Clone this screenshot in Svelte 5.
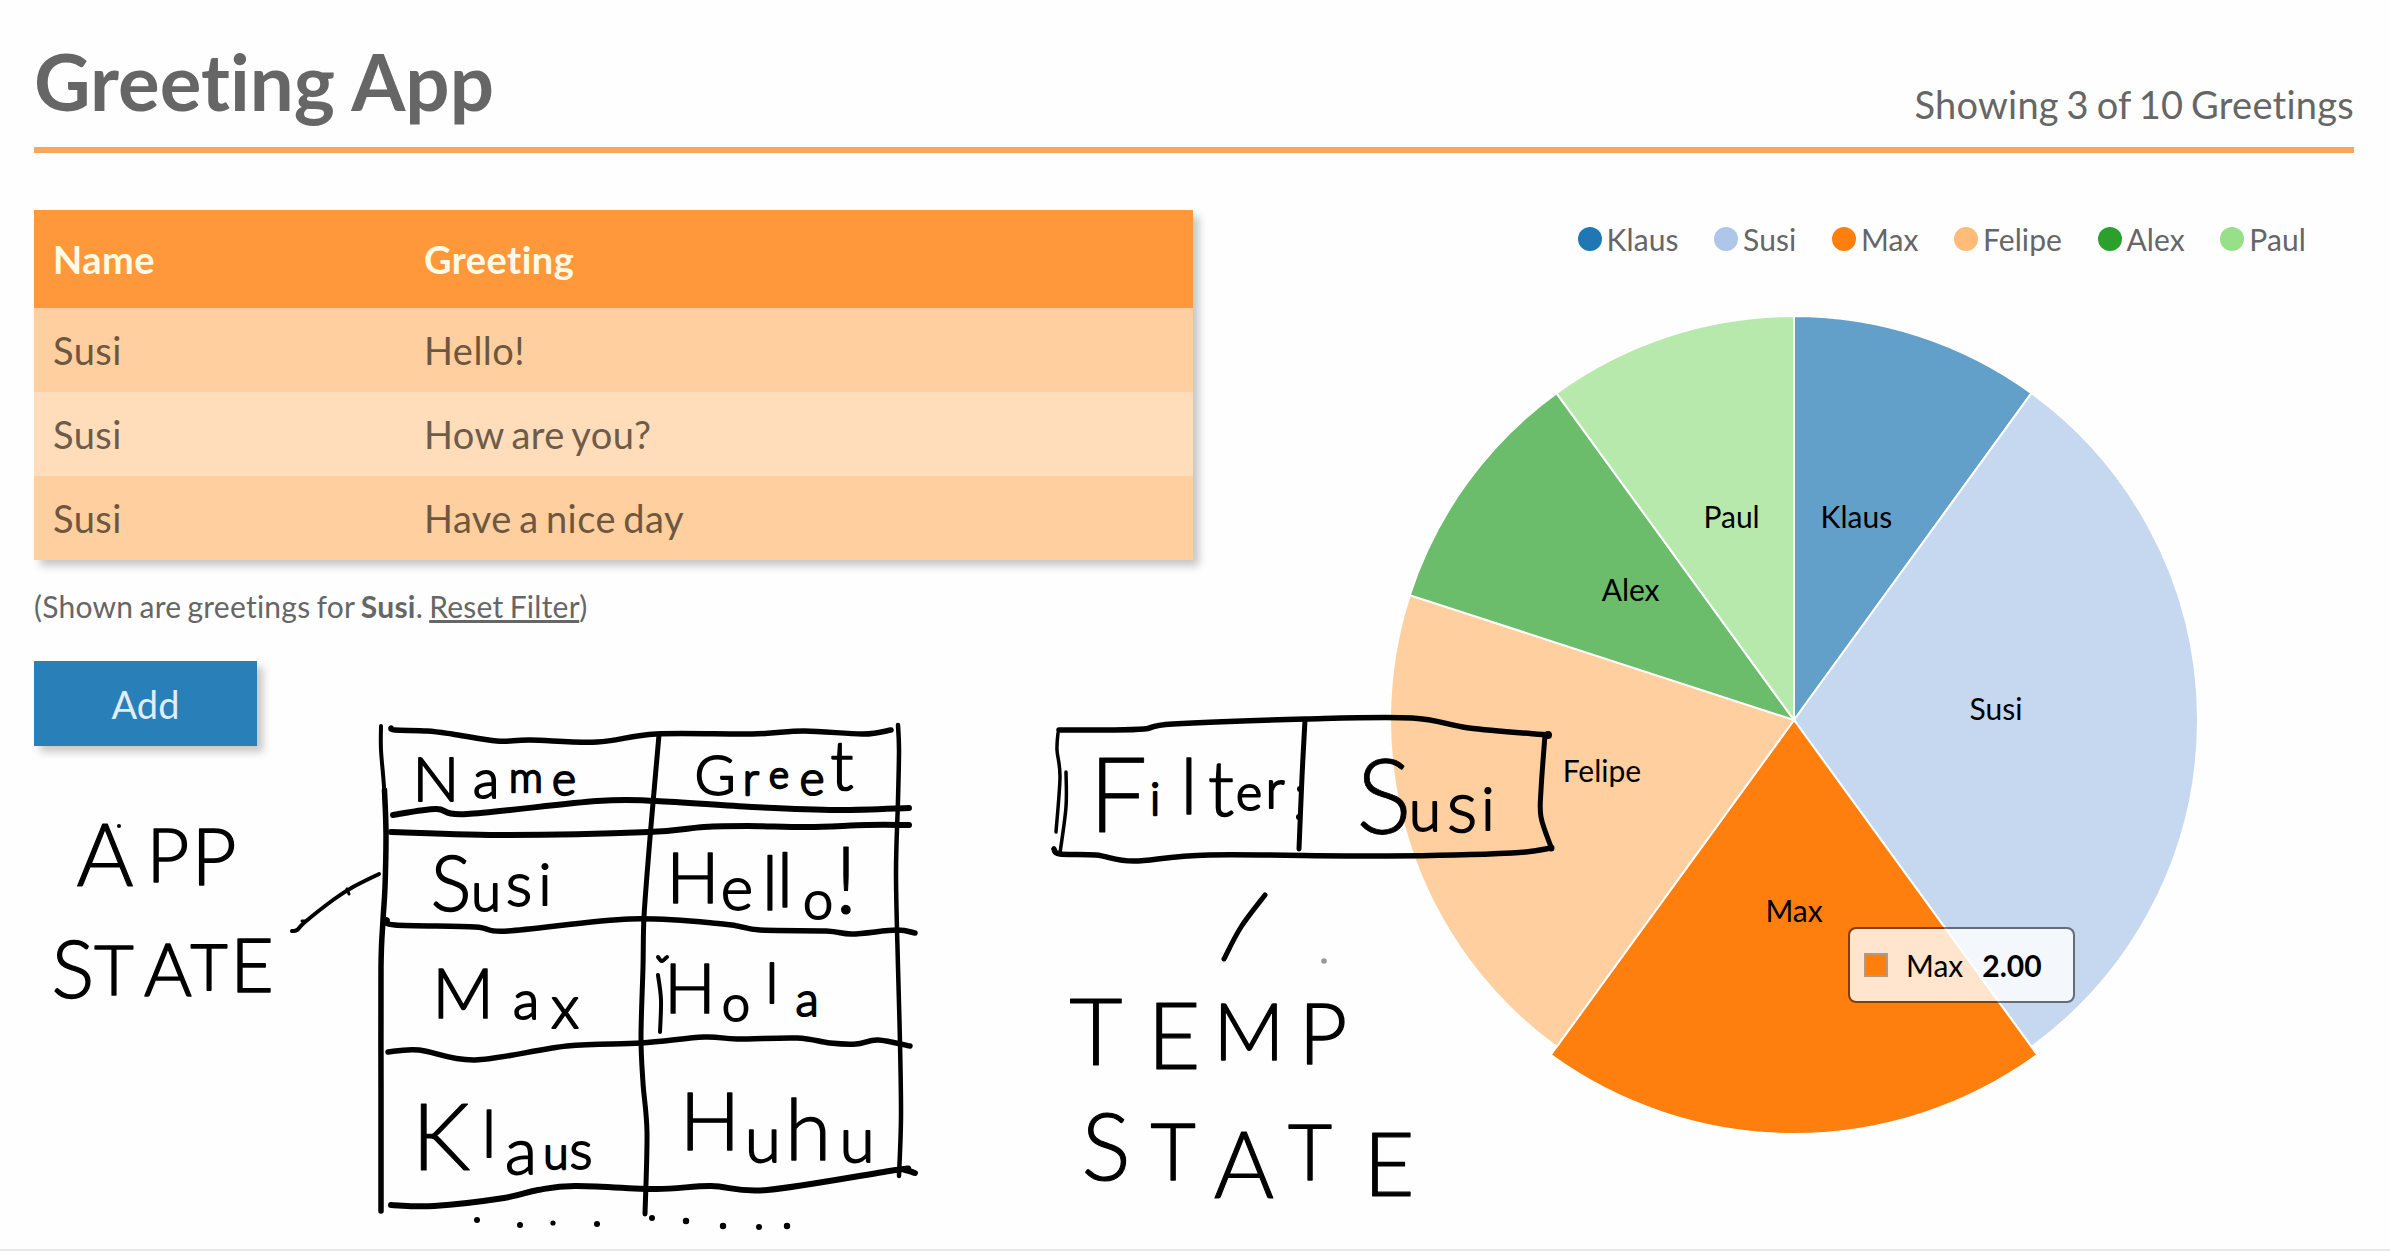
<script>
  const rows = [
    { name: 'Susi', greeting: 'Hello!' },
    { name: 'Susi', greeting: 'How are you?' },
    { name: 'Susi', greeting: 'Have a nice day' }
  ];

  const people = [
    { name: 'Klaus', count: 1, color: '#1f77b4' },
    { name: 'Susi', count: 3, color: '#aec7e8' },
    { name: 'Max', count: 2, color: '#ff7f0e', active: true },
    { name: 'Felipe', count: 2, color: '#ffbb78' },
    { name: 'Alex', count: 1, color: '#2ca02c' },
    { name: 'Paul', count: 1, color: '#98df8a' }
  ];

  const total = people.reduce((sum, p) => sum + p.count, 0);
  const radius = 404;

  function polar(r, turn) {
    const a = turn * 2 * Math.PI;
    return [r * Math.sin(a), -r * Math.cos(a)];
  }

  let passed = 0;
  const slices = people.map((p) => {
    const from = passed / total;
    passed += p.count;
    const to = passed / total;
    const r = p.active ? radius + 10 : radius;
    const [x1, y1] = polar(r, from);
    const [x2, y2] = polar(r, to);
    const [lx, ly] = polar(radius / 2, (from + to) / 2);
    return { ...p, lx, ly, d: `M0 0L${x1} ${y1}A${r} ${r} 0 0 1 ${x2} ${y2}Z` };
  });

  // Catmull-Rom curve through a list of points
  function smooth(p) {
    let d = `M${p[0][0]} ${p[0][1]}`;
    for (let i = 0; i < p.length - 1; i++) {
      const a = p[i - 1] ?? p[i];
      const b = p[i];
      const c = p[i + 1];
      const e = p[i + 2] ?? c;
      d += `C${b[0] + (c[0] - a[0]) / 6} ${b[1] + (c[1] - a[1]) / 6} ${c[0] - (e[0] - b[0]) / 6} ${c[1] - (e[1] - b[1]) / 6} ${c[0]} ${c[1]}`;
    }
    return d;
  }

  const strokes = [
    // sketched table: verticals
    { w: 4, p: [[381, 726], [381, 750], [384, 787], [386, 833]] },
    { w: 5.5, p: [[384.5, 790], [386, 833], [385, 887], [383, 920], [381, 967], [381, 1090], [381, 1211]] },
    { w: 4.5, p: [[898, 725], [899, 750], [898, 800], [896, 873], [898, 967], [900, 1043], [901, 1117], [899, 1176]] },
    { w: 5, p: [[659, 735], [653, 803], [649, 850], [644, 917], [643, 967], [641, 1037], [643, 1083], [647, 1133], [645, 1214]] },
    // sketched table: horizontals
    { w: 5.5, p: [[391, 728], [395, 730], [427, 731], [452, 734], [497, 741], [530, 740], [597, 742], [656, 734], [752, 734], [804, 731], [863, 734], [891, 730]] },
    { w: 6, p: [[393, 815], [436, 809], [467, 814], [597, 801], [656, 801], [752, 807], [837, 810], [909, 808]] },
    { w: 6, p: [[391, 832], [508, 835], [649, 832], [704, 827], [748, 826], [808, 827], [867, 825], [909, 825]] },
    { w: 5.5, p: [[387, 920], [395, 925], [475, 927], [508, 931], [630, 919], [723, 924], [760, 930], [826, 931], [852, 934], [896, 930], [915, 933]] },
    { w: 5.5, p: [[388, 1052], [419, 1050], [475, 1060], [567, 1046], [641, 1043], [704, 1037], [737, 1039], [797, 1038], [830, 1043], [856, 1044], [878, 1040], [910, 1046]] },
    { w: 6, p: [[391, 1205], [434, 1206], [504, 1198], [538, 1190], [575, 1186], [656, 1189], [711, 1186], [767, 1190], [896, 1170], [905, 1170], [915, 1173]] },
    // stray marks beside the third row
    { w: 4, p: [[658, 975], [661, 1000], [660, 1032]] },
    { w: 4, p: [[658, 957], [662, 961], [667, 957]] },
    // connector from the label to the table
    { w: 4, p: [[292, 931], [297, 930], [305, 922], [333, 900], [353, 887], [379, 874]] },
    { w: 3, p: [[347, 889], [349, 894]] },
    { w: 3, p: [[302, 921], [305, 921]] },
    // filter box
    { w: 5.5, p: [[1059, 730], [1105, 730], [1144, 729], [1173, 724], [1305, 719], [1412, 718], [1469, 728], [1548, 735]] },
    { w: 5, p: [[1545, 735], [1541, 790], [1541, 817], [1551, 847]] },
    { w: 5.5, p: [[1054, 849], [1060, 854], [1096, 855], [1134, 861], [1209, 855], [1387, 856], [1512, 853], [1551, 848]] },
    { w: 3.5, p: [[1058, 733], [1057, 750], [1060, 777], [1056, 832]] },
    { w: 3.5, p: [[1066, 772], [1066, 807], [1060, 853]] },
    { w: 5, p: [[1305, 720], [1302, 777], [1299, 849]] },
    { w: 5, p: [[1265, 895], [1241, 927], [1224, 959]] }
  ];

  // x, y, radius
  const dots = [
    [477, 1220, 3], [520, 1225, 3], [553, 1223, 2.6], [597, 1224, 3], [652, 1218, 3],
    [686, 1221, 3.2], [723, 1226, 3.2], [759, 1227, 3], [787, 1226, 3.2], [119, 826, 2],
    [1300, 789, 3], [1299, 817, 3], [1548, 735, 4], [1551, 848, 3.5]
  ];

  // each letter: character, centre x, baseline y, size
  const notes = [
    [['A', 105, 886, 87], ['P', 168, 882, 74], ['P', 214, 885, 78]],
    [['S', 73, 998, 80], ['T', 114, 995, 68], ['A', 168, 996, 73], ['T', 209, 990, 64], ['E', 252, 992, 75]],
    [['N', 436, 801, 62], ['a', 486, 798, 54], ['m', 526, 792, 42], ['e', 564, 795, 46]],
    [['G', 715, 795, 56], ['r', 751, 795, 46], ['e', 779, 788, 38], ['e', 812, 795, 48], ['t', 842, 790, 68]],
    [['S', 451, 911, 76], ['u', 486, 911, 54], ['s', 519, 906, 62], ['i', 545, 905, 58]],
    [['H', 693, 903, 70], ['e', 737, 910, 62], ['l', 770, 910, 74], ['l', 785, 907, 74], ['o', 818, 919, 54], ['!', 846, 913, 92]],
    [['M', 463, 1018, 68], ['a', 526, 1019, 54], ['x', 565, 1028, 60]],
    [['H', 690, 1013, 68], ['o', 736, 1021, 50], ['l', 772, 1003, 56], ['a', 807, 1016, 48]],
    [['K', 441, 1170, 92], ['l', 489, 1157, 66], ['a', 521, 1174, 66], ['u', 556, 1169, 46], ['s', 581, 1169, 54]],
    [['H', 710, 1150, 80], ['u', 763, 1162, 66], ['h', 808, 1160, 84], ['u', 857, 1162, 64]],
    [['F', 1118, 832, 104], ['i', 1155, 815, 46], ['l', 1189, 814, 76], ['t', 1221, 816, 76], ['e', 1249, 810, 50], ['r', 1275, 808, 54]],
    [['S', 1384, 834, 104], ['u', 1425, 831, 58], ['s', 1462, 832, 72], ['i', 1488, 830, 60]],
    [['T', 1096, 1065, 92], ['E', 1174, 1069, 92], ['M', 1249, 1060, 78], ['P', 1323, 1064, 84]],
    [['S', 1106, 1180, 92], ['T', 1173, 1180, 78], ['A', 1244, 1198, 92], ['T', 1310, 1180, 76], ['E', 1389, 1196, 88]]
  ];

  // outline that brings a light letter of any size to one pen width
  const penOutline = (size) => 3.4 - size * 0.025;
</script>

<div class="page">
  <header>
    <h1>Greeting App</h1>
    <span class="count">Showing 3 of 10 Greetings</span>
  </header>

  <main>
    <section class="list">
      <table>
        <thead>
          <tr><th class="name">Name</th><th>Greeting</th></tr>
        </thead>
        <tbody>
          {#each rows as row}
            <tr><td>{row.name}</td><td>{row.greeting}</td></tr>
          {/each}
        </tbody>
      </table>
      <p class="filter">(Shown are greetings for <b>Susi</b>. <a href="#reset">Reset Filter</a>)</p>
      <button>Add</button>
    </section>

    <section class="chart">
      <ul class="legend">
        {#each people as p}
          <li>
            <svg class="dot" viewBox="0 0 24 24"><circle cx="12" cy="12" r="12" fill={p.color} /></svg>
            <span>{p.name}</span>
          </li>
        {/each}
      </ul>
      <svg class="pie" viewBox="-420 -420 840 840">
        {#each slices as s}
          <path class="slice" class:active={s.active} d={s.d} fill={s.color} />
        {/each}
        {#each slices as s}
          <text class="label" x={s.lx} y={s.ly}>{s.name}</text>
        {/each}
      </svg>
      <div class="tooltip">
        <span class="swatch"></span>
        <span class="key">Max</span>
        <b>2.00</b>
      </div>
    </section>
  </main>

  <svg class="ink" viewBox="0 0 2390 1251">
    {#each strokes as s}
      <path d={smooth(s.p)} stroke-width={s.w} />
    {/each}
    {#each dots as [x, y, r]}
      <circle cx={x} cy={y} {r} />
    {/each}
    <circle class="pointer" cx="1324" cy="961" r="2.8" />
    {#each notes as letters}
      <text>{#each letters as [c, x, y, size]}<tspan {x} {y} font-size={size} stroke-width={penOutline(size)}>{c}</tspan>{/each}</text>
    {/each}
  </svg>
</div>

<style>
  :global(body) {
    background: #fefefe;
  }
  .page {
    position: relative;
    box-sizing: border-box;
    width: 2390px;
    height: 1251px;
    padding: 0 36px 0 34px;
    border-bottom: 2px solid #e9e9e9;
    overflow: hidden;
    color: #666;
    font: 38px/1.2 Lato, sans-serif;
    font-variant-ligatures: none;
  }
  header {
    display: flex;
    justify-content: space-between;
    align-items: baseline;
    box-sizing: border-box;
    height: 153px;
    padding-top: 34px;
    border-bottom: 6px solid #f9a65a;
  }
  h1 {
    margin: 0;
    font-size: 78px;
    font-weight: 700;
    line-height: 94px;
  }
  .count {
    position: relative;
    top: 8px;
    letter-spacing: 0.25px;
    word-spacing: -2.2px;
  }
  main {
    display: flex;
    padding-top: 57px;
  }
  .list {
    width: 1159px;
  }
  table {
    width: 100%;
    border-collapse: collapse;
    box-shadow: 6px 6px 8px rgba(0, 0, 0, 0.22);
  }
  th,
  td {
    padding: 2px 20px 0 19px;
    text-align: left;
    letter-spacing: 0.45px;
    word-spacing: -2.8px;
  }
  th {
    height: 96px;
    background: #ff983b;
    color: #fffbe6;
    font-weight: 700;
  }
  .name {
    width: 332px;
  }
  td {
    height: 82px;
    background: #ffcf9f;
    color: #6d573f;
  }
  tr:nth-child(even) td {
    background: #ffddbb;
    color: #6d5c4a;
  }
  .filter {
    margin: 28px 0 0;
    font-size: 30px;
    line-height: 36px;
    letter-spacing: 0.25px;
    word-spacing: -1.8px;
  }
  .filter a {
    color: inherit;
    text-decoration: underline;
  }
  button {
    display: block;
    width: 223px;
    height: 85px;
    margin-top: 37px;
    padding: 2px 0 0;
    border: 0;
    background: #297fb8;
    box-shadow: 6px 6px 8px rgba(0, 0, 0, 0.22);
    color: #e1edf5;
    font: inherit;
  }
  .chart {
    position: relative;
    flex: 1;
  }
  .legend {
    display: flex;
    justify-content: flex-end;
    gap: 35.5px;
    margin: 0;
    padding: 11px 48px 0 0;
    list-style: none;
    font-size: 30px;
    line-height: 36px;
    letter-spacing: 0.1px;
  }
  .legend li {
    display: flex;
    align-items: center;
    gap: 5px;
  }
  .dot {
    width: 24px;
    height: 24px;
  }
  .pie {
    display: block;
    width: 840px;
    height: 840px;
    margin: 43px 0 0 181px;
  }
  .slice {
    stroke: #fff;
    stroke-width: 2;
    fill-opacity: 0.7;
  }
  .slice.active {
    fill-opacity: 1;
  }
  .label {
    fill: #000;
    font-size: 30px;
    text-anchor: middle;
  }
  .tooltip {
    position: absolute;
    left: 655px;
    top: 717px;
    display: flex;
    align-items: center;
    box-sizing: border-box;
    width: 227px;
    height: 76px;
    padding-left: 14px;
    border: 2px solid rgba(0, 0, 0, 0.5);
    border-radius: 8px;
    background: rgba(255, 255, 255, 0.8);
    background-clip: padding-box;
    color: #000;
    font-size: 30px;
  }
  .swatch {
    box-sizing: border-box;
    width: 24px;
    height: 24px;
    margin-right: 18px;
    border: 2px solid #b29a85;
    background: #ff7f0e;
  }
  .key {
    margin-right: 19px;
  }
  .ink {
    position: absolute;
    inset: 0;
    width: 2390px;
    height: 1251px;
    pointer-events: none;
  }
  .ink path {
    fill: none;
    stroke: #000;
    stroke-linecap: round;
    stroke-linejoin: round;
  }
  .ink text {
    fill: #000;
    stroke: #000;
    stroke-linejoin: round;
    font-weight: 300;
    text-anchor: middle;
  }
  .ink .pointer {
    fill: #999;
  }
</style>
